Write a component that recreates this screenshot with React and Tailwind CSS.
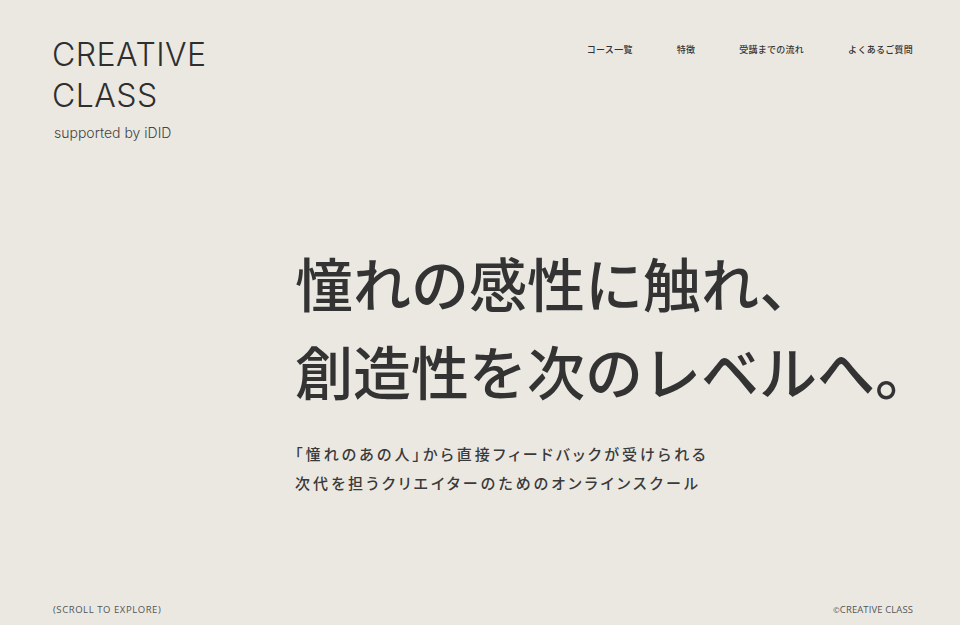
export default function App() {
  const nav = ["コース一覧", "特徴", "受講までの流れ", "よくあるご質問"];
  return (
    <div className="flex h-[625px] w-[960px] flex-col overflow-hidden bg-[#ebe8e2] text-[#333333]">
      <header className="flex items-start justify-between pl-[52px] pr-[47px] pt-[34px]">
        <div className="flex flex-col">
          <div
            className="text-[32px] font-light leading-[41px] tracking-[0.015em] text-[#2e2e2e]"
            style={{ fontFamily: "Inter, 'Liberation Sans', sans-serif" }}
          >
            <div>CREATIVE</div>
            <div>CLASS</div>
          </div>
          <div
            className="mt-[7px] pl-[2px] text-[14px] font-light leading-[20px] text-[#444444]"
            style={{ fontFamily: "Inter, 'Liberation Sans', sans-serif" }}
          >
            supported by iDID
          </div>
        </div>
        <nav
          className="mt-[7px] flex items-center gap-[44px] text-[9px] font-medium tracking-[0.03em] text-[#333333]"
          style={{ fontFamily: "'Noto Sans CJK JP', sans-serif" }}
        >
          {nav.map((n) => (
            <a key={n} className="leading-[18px]">
              {n}
            </a>
          ))}
        </nav>
      </header>

      <main
        className="flex flex-1 flex-col pl-[295px] pt-[95px]"
        style={{ fontFamily: "'Noto Sans CJK JP', sans-serif" }}
      >
        <h1 className="text-[58px] font-medium leading-[88px] text-[#333333]">
          <div>憧れの感性に触れ、</div>
          <div>創造性を次のレベルへ。</div>
        </h1>
        <p className="mt-[25px] text-[15px] font-medium leading-[29px] tracking-[0.205em] text-[#3a3a3a] [font-feature-settings:'palt']">
          <span className="block">「憧れのあの人」から直接フィードバックが受けられる</span>
          <span className="block">次代を担うクリエイターのためのオンラインスクール</span>
        </p>
      </main>

      <footer
        className="flex items-center justify-between pb-[7px] pl-[53px] pr-[47px] text-[9.5px] tracking-[0.06em] text-[#555555]"
        style={{ fontFamily: "'Open Sans', sans-serif" }}
      >
        <span className="leading-[16px]">(SCROLL TO EXPLORE)</span>
        <span className="leading-[16px] tracking-[0.01em]">
          <span className="text-[8px]">©</span>CREATIVE CLASS
        </span>
      </footer>
    </div>
  );
}
